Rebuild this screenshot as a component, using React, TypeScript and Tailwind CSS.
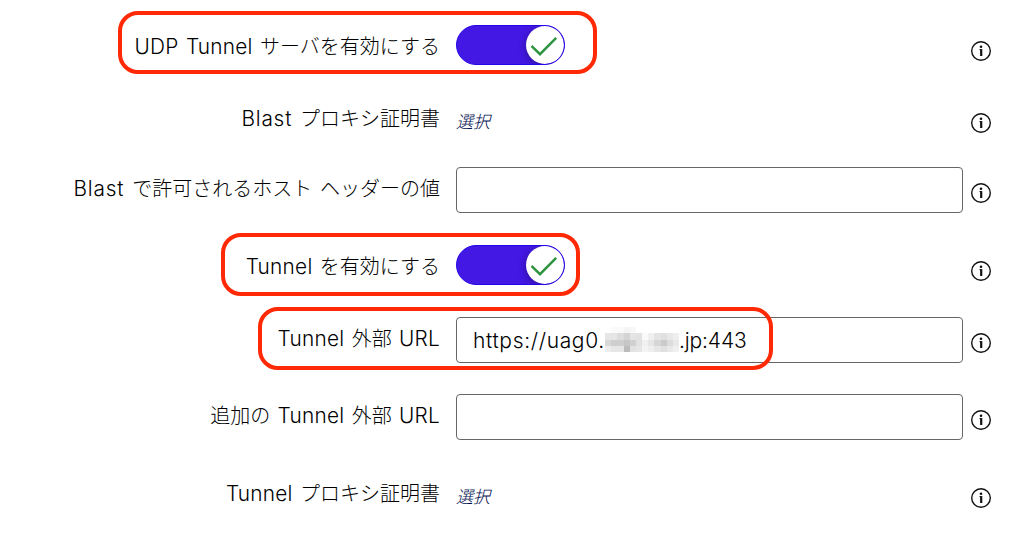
import { ReactNode } from "react";

type Row = {
  label: ReactNode;
  height: string;
  control: ReactNode;
};

// Latin runs inside labels are set slightly larger than the kana
const En = ({ children, wide }: { children: ReactNode; wide?: boolean }) => (
  <span className={wide ? "text-[20.8px] tracking-[0.8px]" : "text-[20.8px] tracking-[0.25px]"}>{children}</span>
);

const Toggle = () => (
  <button
    type="button"
    role="switch"
    aria-checked="true"
    className="mt-[9px] flex h-10 w-[109px] justify-end overflow-hidden rounded-full border border-[#2208e8] bg-[#4318e4]"
  >
    <span className="flex h-[38px] w-[38px] items-center justify-center rounded-full bg-white shadow-[0_2px_8px_rgba(0,0,0,0.35)]">
      <svg width="28" height="22" viewBox="0 0 28 22" fill="none">
        <path d="M0.4 12L9 20.2L25.2 3.8" stroke="#2f9440" strokeWidth="2.5" />
      </svg>
    </span>
  </button>
);

const SelectLink = () => (
  <a href="#" className="mt-[21px] block text-[17px] leading-[26px] italic text-[#00104f]">
    選択
  </a>
);

const Field = ({ children }: { children?: ReactNode }) => (
  <div className="mt-[9px] flex h-[46px] w-[507px] items-center rounded-[4px] border border-[#666] bg-white pl-4 whitespace-nowrap">
    {children}
  </div>
);

const mosaic = [
  ["#ffffff", "#fafafa", "#fafafa", "#f4f4f4", "#f8f8f8", "#ffffff", "#ffffff", "#ffffff", "#ffffff", "#ffffff", "#ffffff", "#ffffff"],
  ["#e6e6e6", "#e6e6e6", "#dddddd", "#d4d4d4", "#e4e4e4", "#e2e2e2", "#fafafa", "#f0f0f0", "#e4e4e4", "#e0e0e0", "#e8e8e8", "#eeeeee"],
  ["#d8d8d8", "#cecece", "#cecece", "#c6c6c6", "#d0d0d0", "#e2e2e2", "#f0f0f0", "#e6e6e6", "#d6d6d6", "#cacaca", "#dcdcdc", "#e8e8e8"],
  ["#ececec", "#e6e6e6", "#e6e6e6", "#bcbcbc", "#e2e2e2", "#e6e6e6", "#f4f4f4", "#eeeeee", "#e6e6e6", "#e0e0e0", "#e8e8e8", "#f0f0f0"],
];

const Mosaic = () => (
  <svg className="mb-px" width="74" height="25" viewBox="0 0 12 4" preserveAspectRatio="none" shapeRendering="crispEdges">
    {mosaic.map((line, y) =>
      line.map((fill, x) => <rect key={`${x}-${y}`} x={x} y={y} width="1" height="1" fill={fill} />)
    )}
  </svg>
);

const InfoIcon = () => (
  <svg className="mt-[25px]" width="20" height="20" viewBox="0 0 20 20" fill="none">
    <circle cx="10" cy="10" r="9.3" stroke="#111" strokeWidth="1.4" />
    <circle cx="10" cy="5.7" r="1.3" fill="#111" />
    <path d="M8.5 8.6H10.2" stroke="#111" strokeWidth="1" />
    <path d="M10.2 8.1V15" stroke="#111" strokeWidth="2.2" />
  </svg>
);

const rows: Row[] = [
  { label: <><En>UDP Tunnel </En>サーバを有効にする</>, height: "h-[72px]", control: <Toggle /> },
  { label: <><En wide>Blast </En>プロキシ証明書</>, height: "h-[70px]", control: <SelectLink /> },
  { label: <><En wide>Blast </En>で許可されるホスト<En wide> </En>ヘッダーの値</>, height: "h-[78px]", control: <Field /> },
  { label: <><En>Tunnel </En>を有効にする</>, height: "h-[72px]", control: <Toggle /> },
  {
    label: <><En>Tunnel </En>外部<En> URL</En></>,
    height: "h-[77px]",
    control: (
      <Field>
        <span className="w-[132px] pt-px text-[21px] tracking-[0.65px]">https://uag0.</span>
        <Mosaic />
        <span className="pt-px text-[21px] tracking-[-0.15px]">.jp:443</span>
      </Field>
    ),
  },
  { label: <>追加の<En> Tunnel </En>外部<En> URL</En></>, height: "h-[78px]", control: <Field /> },
  { label: <><En>Tunnel </En>プロキシ証明書</>, height: "h-[72px]", control: <SelectLink /> },
];

const marks = [
  "left-[118px] top-[11px] h-[63px] w-[479px]",
  "left-[221px] top-[233px] h-[63px] w-[359px]",
  "left-[258px] top-[307px] h-[63px] w-[515px]",
];

export default function App() {
  return (
    <main className="relative h-[536px] w-[1024px] overflow-hidden bg-white pt-4 font-[Inter,'Noto_Sans_CJK_JP',sans-serif] font-light text-black">
      {rows.map((row, i) => (
        <div key={i} className={`grid grid-cols-[440px_515px_auto] ${row.height}`}>
          <div className="mt-4 text-right text-xl leading-[30px] [word-spacing:1.2px] whitespace-nowrap">{row.label}</div>
          <div className="pl-4">{row.control}</div>
          <div className="pl-4">
            <InfoIcon />
          </div>
        </div>
      ))}
      {marks.map((mark) => (
        <div key={mark} className={`pointer-events-none absolute rounded-[20px] border-4 border-[#ff2a05] ${mark}`} />
      ))}
    </main>
  );
}
